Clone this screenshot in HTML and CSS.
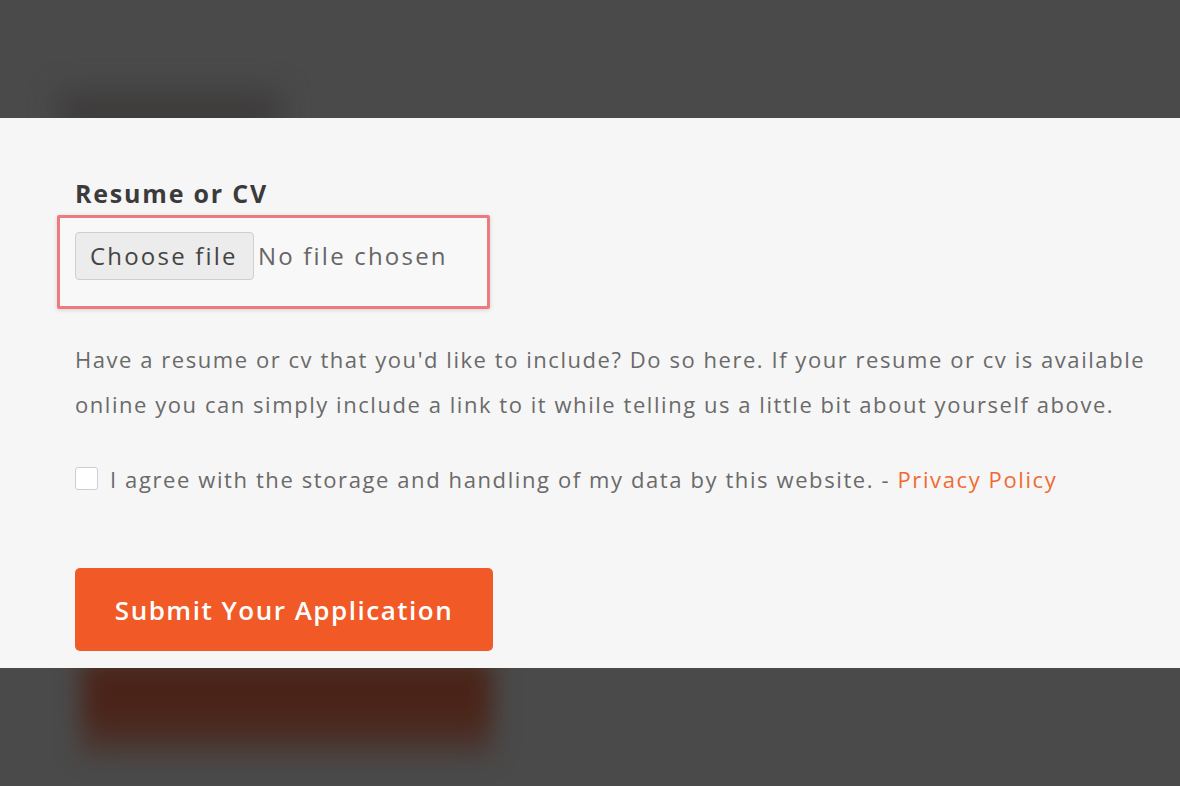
FILE: index.html
```html
<!DOCTYPE html>
<html lang="en">
<head>
<meta charset="utf-8">
<title>Resume or CV</title>
<link rel="stylesheet" href="styles.css">
</head>
<body>
<div class="band band-top"><div class="shade"></div></div>
<main class="panel">
  <div class="field-label">Resume or CV</div>
  <div class="file-box">
    <span class="file-btn">Choose file</span>
    <span class="file-name">No file chosen</span>
  </div>
  <p class="help">Have a resume or cv that you'd like to include? Do so here. If your resume or cv is available online you can simply include a link to it while telling us a little bit about yourself above.</p>
  <label class="agree">
    <span class="check"></span>
    <span class="agree-text">I agree with the storage and handling of my data by this website. - <a class="policy" href="#">Privacy Policy</a></span>
  </label>
  <button class="submit" type="button">Submit Your Application</button>
</main>
<div class="band band-bottom"><div class="glow"></div></div>
</body>
</html>
```
FILE: styles.css
```css
html, body {
  margin: 0;
  padding: 0;
}
body {
  width: 1180px;
  height: 786px;
  overflow: hidden;
  background: #4a4a4a;
  font-family: "Open Sans", Lato, Arial, sans-serif;
}
.band {
  height: 118px;
  background: #4a4a4a;
  overflow: hidden;
}
.band-top {
  display: flex;
  align-items: flex-end;
}
.shade {
  width: 220px;
  height: 40px;
  margin-left: 60px;
  margin-bottom: -14px;
  background: #3e3b3b;
  filter: blur(14px);
}
.glow {
  width: 410px;
  height: 96px;
  margin-top: -8px;
  margin-left: 82px;
  background: linear-gradient(#4a2317 0%, #4a2317 55%, rgba(74, 35, 23, 0.35) 100%);
  filter: blur(13px);
}
.panel {
  height: 550px;
  box-sizing: border-box;
  background: #f6f6f6;
  padding: 60px 0 0 75px;
}
.field-label {
  font-size: 25px;
  font-weight: 700;
  letter-spacing: 1.8px;
  color: #3b3b3b;
  line-height: 30px;
}
.file-box {
  width: 433px;
  height: 94px;
  box-sizing: border-box;
  margin: 7px 0 0 -18px;
  border: 3px solid #ee7a7f;
  border-radius: 2px;
  background: #f8f8f8;
  box-shadow: 0 1px 4px rgba(0,0,0,0.15);
  padding: 14px 15px 0;
  display: flex;
  align-items: flex-start;
}
.file-btn {
  height: 48px;
  width: 179px;
  box-sizing: border-box;
  border: 1px solid #cfcfcf;
  border-radius: 4px;
  background: #ececec;
  color: #444;
  font-size: 24px;
  letter-spacing: 2.2px;
  line-height: 46px;
  padding-left: 14px;
}
.file-name {
  margin-left: 4px;
  color: #666;
  font-size: 24px;
  letter-spacing: 2.2px;
  line-height: 48px;
}
.help {
  margin: 28px 0 0;
  width: 1095px;
  color: #6a6a6a;
  font-size: 22px;
  letter-spacing: 1.55px;
  line-height: 45px;
}
.agree {
  margin-top: 29px;
  height: 45px;
  display: flex;
  align-items: center;
  color: #6a6a6a;
  font-size: 22px;
  letter-spacing: 1.6px;
}
.check {
  flex: none;
  width: 21px;
  height: 21px;
  border: 1px solid #cfcfcf;
  border-radius: 3px;
  background: #fff;
  margin-right: 12px;
}
.policy {
  color: #f26a33;
  text-decoration: none;
}
.submit {
  display: block;
  margin-top: 67px;
  width: 418px;
  height: 83px;
  border: none;
  border-radius: 5px;
  background: #f15a27;
  color: #fff;
  font-family: "Open Sans", Lato, Arial, sans-serif;
  font-size: 26px;
  font-weight: 600;
  letter-spacing: 1.5px;
  padding: 0;
}
```
